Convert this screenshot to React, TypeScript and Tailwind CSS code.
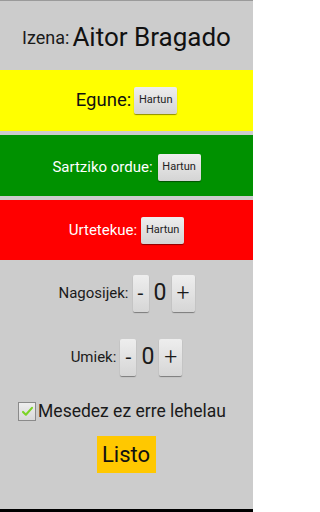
const font = { fontFamily: "Roboto, 'Noto Sans', sans-serif" };

function Hartun() {
  return (
    <button className="h-[27px] w-[43px] rounded-[2px] bg-gradient-to-b from-[#eeeeee] to-[#d4d4d4] text-[11px] text-[#222] shadow-[0_1px_1px_rgba(0,0,0,0.45)]">
      Hartun
    </button>
  );
}

function Counter({ label }: { label: string }) {
  return (
    <div className="flex items-center justify-center gap-[4px]">
      <span className="text-[15px] text-[#1a1a1a]">{label}:</span>
      <button className="flex h-[37px] w-[16px] items-center justify-center rounded-[2px] bg-gradient-to-b from-[#eeeeee] to-[#d6d6d6] text-[21px] leading-none text-[#1a1a1a] shadow-[0_1px_1px_rgba(0,0,0,0.4)]">
        -
      </button>
      <span className="w-[15px] text-center text-[23px] text-[#1a1a1a]">0</span>
      <button className="flex h-[37px] w-[23px] items-center justify-center rounded-[2px] bg-gradient-to-b from-[#eeeeee] to-[#d6d6d6] text-[23px] font-light leading-none text-[#1a1a1a] shadow-[0_1px_1px_rgba(0,0,0,0.4)]">
        +
      </button>
    </div>
  );
}

export default function App() {
  return (
    <div style={font} className="flex h-[512px] w-[253px] flex-col overflow-hidden border-t border-[#9a9a9a] bg-[#cccccc]">
      {/* Name */}
      <div className="flex h-[69px] items-center justify-center gap-[3px] pt-[4px]">
        <span className="text-[18px] text-[#1a1a1a]">Izena:</span>
        <span className="text-[26px] text-[#111]">Aitor Bragado</span>
      </div>

      {/* Day */}
      <div className="flex h-[61px] items-center justify-center gap-[3px] bg-[#ffff00]">
        <span className="text-[18.5px] text-[#111]">Egune:</span>
        <Hartun />
      </div>

      <div className="mt-[4px] flex h-[61px] items-center justify-center gap-[5px] bg-[#009100] pt-[3px]">
        <span className="text-[15px] text-white">Sartziko ordue:</span>
        <Hartun />
      </div>

      <div className="mt-[4px] flex h-[60px] items-center justify-center gap-[4px] bg-[#ff0000] pt-[1px]">
        <span className="text-[15px] text-white">Urtetekue:</span>
        <Hartun />
      </div>

      {/* Counters */}
      <div className="mt-[15px] flex flex-col gap-[27px]">
        <Counter label="Nagosijek" />
        <Counter label="Umiek" />
      </div>

      {/* Checkbox */}
      <label className="mt-[22px] flex items-center justify-center gap-[2px] pr-[9px]">
        <span className="flex h-[19px] w-[18px] items-center justify-center border border-[#8a8a8a] bg-gradient-to-b from-[#eeeeee] to-[#d8d8d8]">
          <svg viewBox="0 0 16 16" className="h-[13px] w-[13px]">
            <path d="M2.5 8.5 L6 12 L13.5 3.5" fill="none" stroke="#7bd424" strokeWidth="2.6" strokeLinecap="round" strokeLinejoin="round" />
          </svg>
        </span>
        <span className="text-[17.5px] text-[#1a1a1a]">Mesedez ez erre lehelau</span>
      </label>

      {/* Done */}
      <div className="mt-[12px] flex justify-center pr-[1px]">
        <button className="h-[37px] w-[59px] bg-[#ffc800] text-[22px] text-[#111]">Listo</button>
      </div>

      <div className="mt-auto h-[3px] bg-black" />
    </div>
  );
}
